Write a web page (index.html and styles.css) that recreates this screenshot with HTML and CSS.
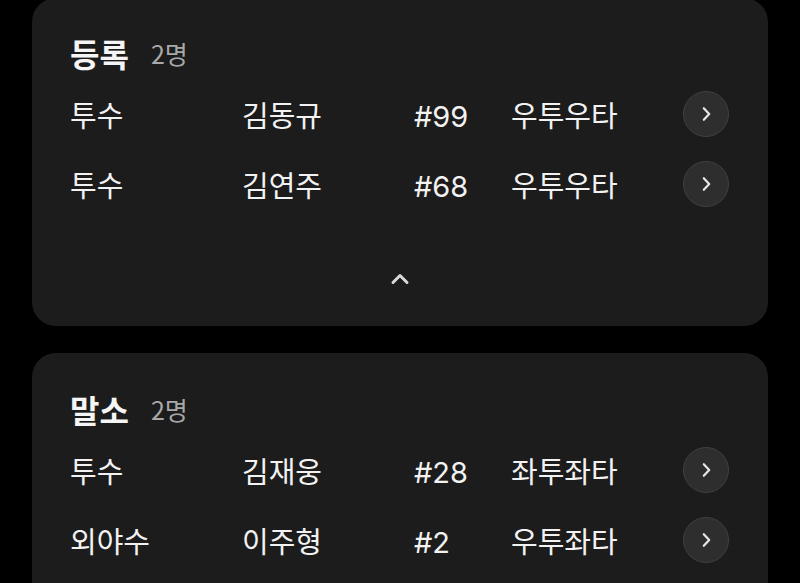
FILE: index.html
```html
<!DOCTYPE html>
<html lang="ko">
<head>
<meta charset="utf-8">
<link rel="stylesheet" href="styles.css">
</head>
<body>
<main class="page">
  <section class="card card-first">
    <h2 class="card-title">등록 <span class="count">2명</span></h2>
    <ul class="roster">
      <li class="row"><span>투수</span><span>김동규</span><span class="num">#99</span><span>우투우타</span>
        <button class="go" aria-label="상세"><svg viewBox="0 0 24 24" width="24" height="24"><path d="M9.8 6.2 L15.2 12 L9.8 17.8" fill="none" stroke="#e6e6e6" stroke-width="2.2" stroke-linecap="round" stroke-linejoin="round"/></svg></button></li>
      <li class="row"><span>투수</span><span>김연주</span><span class="num">#68</span><span>우투우타</span>
        <button class="go" aria-label="상세"><svg viewBox="0 0 24 24" width="24" height="24"><path d="M9.8 6.2 L15.2 12 L9.8 17.8" fill="none" stroke="#e6e6e6" stroke-width="2.2" stroke-linecap="round" stroke-linejoin="round"/></svg></button></li>
    </ul>
    <div class="toggle"><svg viewBox="0 0 24 24" width="28" height="28"><path d="M6 15 L12 9 L18 15" fill="none" stroke="#d8d8d8" stroke-width="2.6" stroke-linecap="round" stroke-linejoin="round"/></svg></div>
  </section>
  <section class="card card-second">
    <h2 class="card-title">말소 <span class="count">2명</span></h2>
    <ul class="roster">
      <li class="row"><span>투수</span><span>김재웅</span><span class="num">#28</span><span>좌투좌타</span>
        <button class="go" aria-label="상세"><svg viewBox="0 0 24 24" width="24" height="24"><path d="M9.8 6.2 L15.2 12 L9.8 17.8" fill="none" stroke="#e6e6e6" stroke-width="2.2" stroke-linecap="round" stroke-linejoin="round"/></svg></button></li>
      <li class="row"><span>외야수</span><span>이주형</span><span class="num">#2</span><span>우투좌타</span>
        <button class="go" aria-label="상세"><svg viewBox="0 0 24 24" width="24" height="24"><path d="M9.8 6.2 L15.2 12 L9.8 17.8" fill="none" stroke="#e6e6e6" stroke-width="2.2" stroke-linecap="round" stroke-linejoin="round"/></svg></button></li>
    </ul>
  </section>
</main>
</body>
</html>
```
FILE: styles.css
```css
* { box-sizing: border-box; }
html, body {
  margin: 0;
  padding: 0;
  background: #000;
  height: 583px;
  overflow: hidden;
}
body {
  font-family: "Noto Sans CJK KR", "Noto Sans", sans-serif;
  color: #f2f2f2;
}
.page {
  display: flex;
  flex-direction: column;
  gap: 27px;
  padding: 0 32px;
}
.card {
  background: #1c1c1c;
  border-radius: 24px;
  padding: 30px 39px 0 38px;
}
.card-first { margin-top: -2px; padding-top: 31px; }
.card-second { padding-top: 32px; padding-bottom: 40px; }
.card-title {
  margin: 0;
  height: 48px;
  line-height: 48px;
  font-size: 32px;
  font-weight: 700;
  color: #f5f5f5;
  display: flex;
  align-items: center;
  gap: 22px;
}
.count {
  font-size: 25px;
  font-weight: 400;
  color: #a8a8a8;
}
.roster {
  list-style: none;
  margin: 2px 0 0;
  padding: 0;
}
.row {
  display: grid;
  grid-template-columns: 172px 172px 97px 1fr 46px;
  align-items: center;
  height: 70px;
  font-size: 29px;
  font-weight: 400;
  line-height: 1;
}
.num {
  font-family: Inter, "Noto Sans CJK KR", sans-serif;
  font-size: 29px;
  padding-top: 5px;
}
.go {
  width: 46px;
  height: 46px;
  border-radius: 50%;
  background: #2e2e2e;
  border: 1px solid #404040;
  display: flex;
  align-items: center;
  justify-content: center;
  padding: 0;
}
.go svg { display: block; }
.toggle {
  display: flex;
  justify-content: center;
  padding: 46px 0 33px;
}
.toggle svg { display: block; }
```
